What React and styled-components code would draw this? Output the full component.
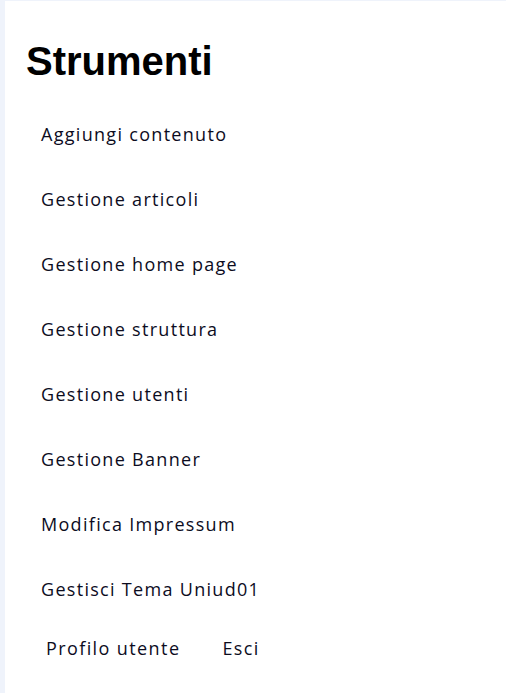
import React from 'react';
import styled, { createGlobalStyle } from 'styled-components';

const GlobalStyle = createGlobalStyle`
  html, body {
    margin: 0;
    padding: 0;
    background: #eff3fb;
  }
  body {
    font-family: "Open Sans", "Liberation Sans", sans-serif;
  }
`;

const Panel = styled.aside`
  margin: 1px 0 0 5px;
  min-height: 692px;
  background: #ffffff;
  padding: 37px 21px 0 21px;
  box-sizing: border-box;
`;

const Title = styled.h2`
  margin: 0 0 38px 0;
  font-family: "Liberation Sans", Arial, sans-serif;
  font-weight: 700;
  font-size: 40px;
  line-height: 46px;
  color: #000;
`;

const Menu = styled.ul`
  list-style: none;
  margin: 0;
  padding: 0 0 0 15px;
  display: flex;
  flex-direction: column;
  gap: 40px;
`;

const MenuItem = styled.li`
  font-size: 18px;
  line-height: 25px;
  letter-spacing: 1.3px;
  color: #0c0c1e;
`;

const UserRow = styled.div`
  display: flex;
  gap: 42px;
  padding: 34px 0 0 20px;
`;

const UserLink = styled.a`
  font-size: 18px;
  line-height: 25px;
  letter-spacing: 1.4px;
  color: #0c0c1e;
  text-decoration: none;
`;

const items = [
  'Aggiungi contenuto',
  'Gestione articoli',
  'Gestione home page',
  'Gestione struttura',
  'Gestione utenti',
  'Gestione Banner',
  'Modifica Impressum',
  'Gestisci Tema Uniud01',
];

export default function App() {
  return (
    <>
      <GlobalStyle />
      <Panel>
        <Title>Strumenti</Title>
        <Menu>
          {items.map((t) => (
            <MenuItem key={t}>{t}</MenuItem>
          ))}
        </Menu>
        <UserRow>
          <UserLink href="#">Profilo utente</UserLink>
          <UserLink href="#">Esci</UserLink>
        </UserRow>
      </Panel>
    </>
  );
}
